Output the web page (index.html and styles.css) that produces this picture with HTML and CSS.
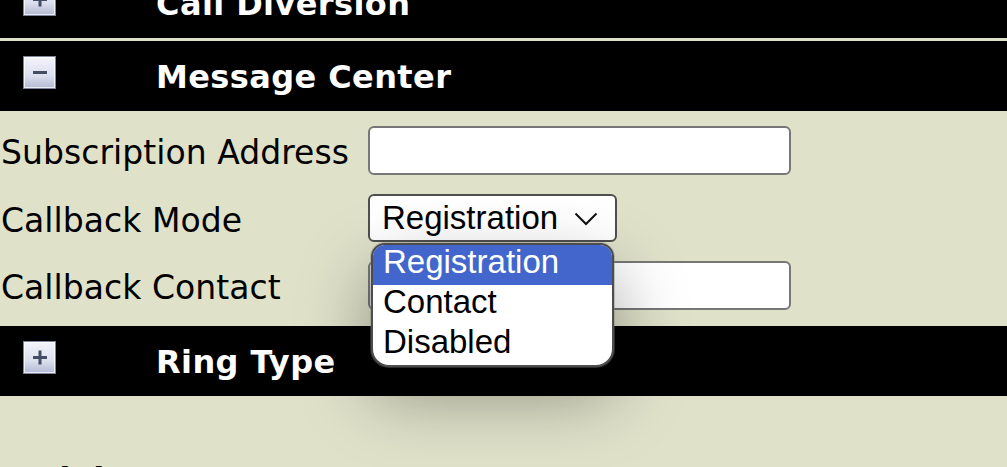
FILE: index.html
```html
<!DOCTYPE html>
<html>
<head>
<meta charset="utf-8">
<link rel="stylesheet" href="styles.css">
</head>
<body>
<div class="page">
  <div class="bar">
    <svg class="tog" width="33" height="33" viewBox="0 0 33 33">
      <defs>
        <linearGradient id="g1" x1="0" y1="0" x2="0" y2="1">
          <stop offset="0" stop-color="#f4f4fc"/>
          <stop offset="0.6" stop-color="#dcdfee"/>
          <stop offset="1" stop-color="#b3b9d2"/>
        </linearGradient>
      </defs>
      <rect x="0.5" y="0.5" width="32" height="32" fill="url(#g1)" stroke="#7d849e"/>
      <rect x="1.5" y="1.5" width="30" height="30" fill="none" stroke="#ffffff" stroke-opacity="0.7"/>
      <rect x="10" y="15" width="14" height="3" fill="#434d64"/>
      <rect x="15.5" y="9.5" width="3" height="14" fill="#434d64"/>
    </svg>
    <span class="title">Call Diversion</span>
  </div>
  <div class="bar">
    <svg class="tog" width="33" height="33" viewBox="0 0 33 33">
      <defs>
        <linearGradient id="g2" x1="0" y1="0" x2="0" y2="1">
          <stop offset="0" stop-color="#f4f4fc"/>
          <stop offset="0.6" stop-color="#dcdfee"/>
          <stop offset="1" stop-color="#b3b9d2"/>
        </linearGradient>
      </defs>
      <rect x="0.5" y="0.5" width="32" height="32" fill="url(#g2)" stroke="#7d849e"/>
      <rect x="1.5" y="1.5" width="30" height="30" fill="none" stroke="#ffffff" stroke-opacity="0.7"/>
      <rect x="10" y="15" width="14" height="3" fill="#434d64"/>
    </svg>
    <span class="title">Message Center</span>
  </div>
  <div class="form">
    <div class="row">
      <span class="label">Subscription Address</span>
      <div class="input"></div>
    </div>
    <div class="row">
      <span class="label">Callback Mode</span>
      <div class="selwrap">
        <div class="select">
          <span>Registration</span>
          <svg class="chev" width="24" height="14" viewBox="0 0 24 14"><polyline points="1.5,1.5 12,12 22.5,1.5" fill="none" stroke="#111" stroke-width="2"/></svg>
        </div>
        <div class="popup">
          <div class="opt sel">Registration</div>
          <div class="opt">Contact</div>
          <div class="opt">Disabled</div>
        </div>
      </div>
    </div>
    <div class="row">
      <span class="label">Callback Contact</span>
      <div class="input"></div>
    </div>
  </div>
  <div class="bar">
    <svg class="tog" width="33" height="33" viewBox="0 0 33 33">
      <defs>
        <linearGradient id="g3" x1="0" y1="0" x2="0" y2="1">
          <stop offset="0" stop-color="#f4f4fc"/>
          <stop offset="0.6" stop-color="#dcdfee"/>
          <stop offset="1" stop-color="#b3b9d2"/>
        </linearGradient>
      </defs>
      <rect x="0.5" y="0.5" width="32" height="32" fill="url(#g3)" stroke="#7d849e"/>
      <rect x="1.5" y="1.5" width="30" height="30" fill="none" stroke="#ffffff" stroke-opacity="0.7"/>
      <rect x="10" y="15" width="14" height="3" fill="#434d64"/>
      <rect x="15.5" y="9.5" width="3" height="14" fill="#434d64"/>
    </svg>
    <span class="title">Ring Type</span>
  </div>
  <div class="note">Lodging</div>
</div>
</body>
</html>
```

FILE: styles.css
```css
html, body {
  margin: 0;
  padding: 0;
  overflow: hidden;
  background: #dfe1c9;
}
body {
  font-family: "DejaVu Sans", Verdana, sans-serif;
  color: #000;
}
.page {
  margin-top: -32px;
}
.bar {
  height: 70px;
  box-sizing: border-box;
  background: #000;
  display: flex;
  align-items: flex-start;
  padding: 15px 0 0 23px;
  margin-bottom: 3px;
}
.tog {
  flex: none;
  display: block;
}
.title {
  color: #fff;
  font-weight: bold;
  font-size: 32px;
  letter-spacing: 0.4px;
  line-height: 37px;
  margin-left: 100px;
  margin-top: 3px;
}
.form {
  display: flex;
  flex-direction: column;
  gap: 19px;
  padding: 15px 0 16px 0;
  margin-top: -3px;
}
.row {
  display: grid;
  grid-template-columns: 368px auto;
  align-items: center;
}
.label {
  font-size: 33px;
  letter-spacing: 0.05px;
  padding-left: 1px;
  padding-top: 4px;
  white-space: nowrap;
}
.input {
  width: 423px;
  height: 49px;
  box-sizing: border-box;
  border: 2px solid #777;
  border-radius: 6px;
  background: #fff;
}
.selwrap {
  position: relative;
  width: 249px;
}
.select {
  width: 249px;
  height: 48px;
  box-sizing: border-box;
  border: 2px solid #4f4f4f;
  border-radius: 6px;
  background: #fff;
  display: flex;
  align-items: center;
  justify-content: space-between;
  padding: 0 17px 0 12px;
  font-family: "Liberation Sans", Arial, sans-serif;
  font-size: 33px;
}
.chev {
  display: block;
  margin-top: 2px;
}
.popup {
  position: absolute;
  left: 3px;
  top: 49px;
  width: 243px;
  box-sizing: border-box;
  border: 2px solid #4d4d4d;
  border-radius: 14px 14px 18px 18px;
  background: #fff;
  overflow: hidden;
  box-shadow: 0 0 0 1px rgba(120,120,120,0.35), 0 28px 70px rgba(0,0,0,0.36);
  z-index: 5;
}
.opt {
  height: 40px;
  line-height: 34px;
  padding-left: 10px;
  font-family: "Liberation Sans", Arial, sans-serif;
  font-size: 33px;
  color: #000;
}
.opt.sel {
  background: #4366cc;
  color: #fff;
}
.note {
  padding: 61px 0 0 5px;
  font-size: 32px;
  font-weight: bold;
}
```
